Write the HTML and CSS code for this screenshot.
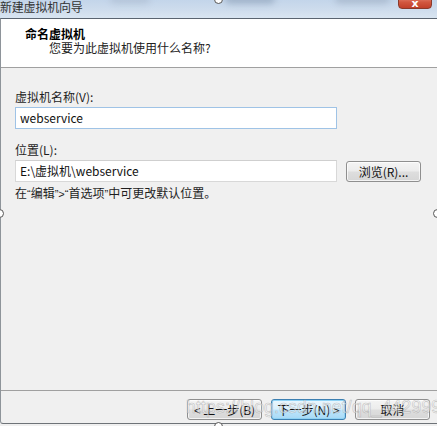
FILE: index.html
```html
<!DOCTYPE html>
<html lang="zh">
<head>
<meta charset="utf-8">
<link rel="stylesheet" href="styles.css">
</head>
<body>
<div class="screen">
  <div class="titlebar">
    <span class="title">新建虚拟机向导</span>
    <span class="blur b1"></span>
    <span class="blur b2"></span>
    <span class="blur b3"></span>
    <span class="close">x</span>
  </div>
  <div class="window">
    <div class="header">
      <div class="h-title">命名虚拟机</div>
      <div class="h-sub">您要为此虚拟机使用什么名称?</div>
    </div>
    <div class="content">
      <div class="field">
        <label class="label">虚拟机名称(V):</label>
        <div class="row">
          <div class="input focus">webservice</div>
        </div>
      </div>
      <div class="field">
        <label class="label">位置(L):</label>
        <div class="row">
          <div class="input">E:\虚拟机\webservice</div>
          <button class="btn browse">浏览(R)...</button>
        </div>
      </div>
      <div class="note">在<span class="q">“</span>编辑<span class="q">”&gt;“</span>首选项<span class="q">”</span>中可更改默认位置。</div>
    </div>
    <div class="footer">
      <button class="btn nav">&lt; 上一步(B)</button>
      <button class="btn nav primary">下一步(N) &gt;</button>
      <button class="btn nav">取消</button>
    </div>
  </div>
  <div class="watermark">https://blog.csdn.net/qq_44299915</div>
  <span class="handle h-top"></span>
  <span class="handle h-left"></span>
  <span class="handle h-right"></span>
  <span class="handle h-bottom"></span>
</div>
</body>
</html>
```
FILE: styles.css
```css
* { box-sizing: border-box; }
html, body { margin: 0; padding: 0; }
body {
  width: 437px;
  height: 426px;
  overflow: hidden;
  background: #f0f0f0;
  font-family: "Noto Sans CJK SC", "Liberation Sans", sans-serif;
  font-size: 12px;
  color: #1e1e1e;
}
.screen {
  position: relative;
  width: 437px;
  height: 426px;
  display: flex;
  flex-direction: column;
}
.titlebar {
  position: relative;
  height: 18px;
  flex: none;
  background: linear-gradient(180deg, #c3d5ea 0%, #cfdded 60%, #d9e5f1 100%);
  overflow: hidden;
}
.title {
  position: absolute;
  left: 0;
  top: -2px;
  font-size: 12px;
  line-height: 18px;
  color: #333;
  letter-spacing: -0.2px;
  z-index: 2;
}
.blur {
  position: absolute;
  top: -6px;
  height: 10px;
  border-radius: 6px;
  background: rgba(120,140,165,0.45);
  filter: blur(3px);
}
.b1 { left: 110px; width: 40px; background: rgba(160,175,195,0.4); }
.b2 { left: 225px; width: 50px; }
.b3 { left: 335px; width: 55px; background: rgba(140,155,175,0.4); }
.close {
  position: absolute;
  right: 5px;
  top: -6px;
  width: 34px;
  height: 15px;
  border: 1px solid #8a3a2c;
  border-radius: 0 0 4px 4px;
  background: linear-gradient(180deg, #e99a8a 0%, #d2573f 55%, #c1402a 100%);
  color: #fff;
  font-family: "DejaVu Sans", sans-serif;
  font-weight: bold;
  font-size: 11px;
  line-height: 17px;
  text-align: center;
  z-index: 2;
}
.window {
  flex: 1;
  display: flex;
  flex-direction: column;
  border-top: 1px solid #5a6470;
  border-left: 1px solid #8e949a;
  border-bottom: 1px solid #6e7378;
  border-bottom-left-radius: 3px;
  background: #f0f0f0;
  margin-bottom: 2px;
}
.header {
  height: 49px;
  flex: none;
  background: #fff;
  border-bottom: 1px solid #a0a0a0;
  padding: 8px 0 0 24px;
}
.h-title {
  font-weight: bold;
  font-size: 12px;
  line-height: 14px;
  color: #000;
}
.h-sub {
  padding-left: 24px;
  font-size: 12px;
  line-height: 14px;
  color: #222;
}
.content {
  flex: 1;
  padding: 22px 0 0 14px;
  display: flex;
  flex-direction: column;
}
.field { display: flex; flex-direction: column; }
.field + .field { margin-top: 14px; }
.label {
  font-size: 12px;
  line-height: 14px;
  height: 17px;
  color: #1e1e1e;
}
.row {
  display: flex;
  align-items: center;
  gap: 9px;
}
.input {
  width: 322px;
  height: 22px;
  background: #fff;
  border: 1px solid #d8d8d8;
  border-top-color: #cfcfcf;
  padding: 0 4px;
  font-size: 12px;
  line-height: 19px;
  color: #111;
}
.input.focus {
  border-color: #9fc3e6;
}
.btn {
  font-family: "Noto Sans CJK SC", "Liberation Sans", sans-serif;
  font-size: 12px;
  color: #111;
  border: 1px solid #8f8f8f;
  border-radius: 3px;
  background: linear-gradient(180deg, #f4f4f4 0%, #ececec 48%, #dedede 52%, #d6d6d6 100%);
  padding: 0;
  line-height: 17px;
  box-shadow: inset 0 0 0 1px rgba(255,255,255,0.7);
}
.browse {
  width: 75px;
  height: 21px;
  margin-top: 1px;
}
.note {
  margin-top: 4px;
  font-size: 12px;
  line-height: 14px;
  color: #1e1e1e;
}
.q {
  font-family: "Liberation Sans", sans-serif;
  font-size: 11px;
}
.footer {
  height: 33px;
  flex: none;
  border-top: 1px solid #a0a0a0;
  display: flex;
  justify-content: flex-end;
  align-items: flex-start;
  gap: 9px;
  padding: 8px 7px 0 0;
}
.nav {
  width: 75px;
  height: 21px;
}
.nav.primary {
  border-color: #3c7fb1;
  background: linear-gradient(180deg, #eaf6fd 0%, #d9f0fc 48%, #bee6fd 52%, #a7d9f5 100%);
  box-shadow: inset 0 0 0 1px #8fd3f5;
}
.watermark {
  position: absolute;
  left: 186px;
  top: 397px;
  font-family: "Liberation Sans", sans-serif;
  font-size: 17.5px;
  letter-spacing: 0.2px;
  color: rgba(255,255,255,0.5);
  -webkit-text-stroke: 0.6px rgba(140,140,140,0.5);
  pointer-events: none;
  white-space: nowrap;
}
.handle {
  position: absolute;
  width: 9px;
  height: 9px;
  border-radius: 50%;
  background: #fff;
  border: 1px solid #555;
}
.h-top { left: 214px; top: -5px; }
.h-left { left: -5px; top: 209px; }
.h-right { left: 433px; top: 209px; }
.h-bottom { left: 214px; top: 422px; }
```
